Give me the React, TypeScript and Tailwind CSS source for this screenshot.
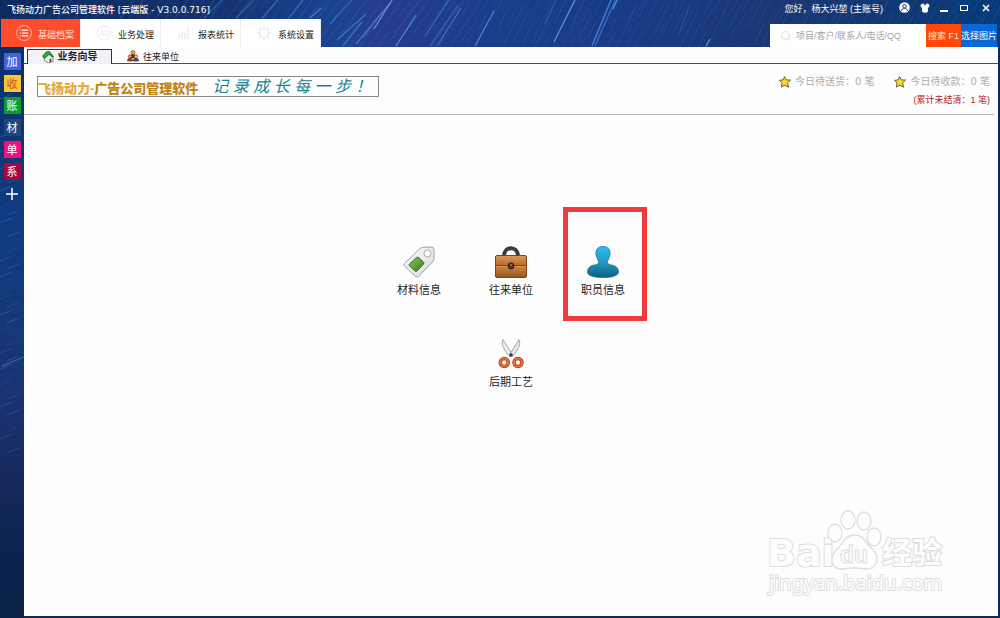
import React from 'react';
import { Search, Shirt, List } from 'lucide-react';

interface Shortcut {
  label: string;
  className: string;
}

const shortcuts: Shortcut[] = [
  { label: '加', className: 'bg-[#4462dc] text-white' },
  { label: '收', className: 'bg-[#f8c537] text-[#c8501a]' },
  { label: '账', className: 'bg-[#0a9c2c] text-white' },
  { label: '材', className: 'bg-[#1c4a76] text-white' },
  { label: '单', className: 'bg-[#f30f80] text-white' },
  { label: '系', className: 'bg-[#a8083f] text-white' },
];

// star trails: lower end x, y, upper end x, y, colour, opacity
const brightTrails: [number, number, number, number, string, number][] = [
  [203, 19, 222, 0, '#3f74c8', 0.6],
  [236, 18, 254, 0, '#3f74c8', 0.6],
  [262, 18, 278, 0, '#4a80d4', 0.6],
  [288, 19, 303, 0, '#5a80d8', 0.7],
  [310, 18, 321, 8, '#6a8ee0', 0.7],
  [330, 24, 352, 0, '#3a7ad4', 0.7],
  [337, 40, 366, 14, '#3a86dc', 0.8],
  [343, 46, 362, 22, '#4292e4', 0.8],
  [356, 44, 390, 3, '#5a7cda', 0.8],
  [363, 38, 382, 12, '#4a74d4', 0.6],
  [374, 29, 392, 0, '#8490e4', 0.9],
  [396, 46, 416, 15, '#4a92ea', 0.9],
  [425, 36, 449, 0, '#3f86dc', 0.7],
  [430, 46, 458, 5, '#3f7cd4', 0.7],
  [437, 46, 461, 8, '#3f86e0', 0.8],
  [475, 46, 494, 11, '#4a94ec', 0.9],
  [554, 42, 575, 0, '#5a9cf0', 0.95],
  [592, 46, 611, 0, '#4a90ec', 0.9],
  [595, 46, 615, 0, '#3a7cd8', 0.8],
  [613, 9, 617, 0, '#5aa0f4', 0.9],
  [545, 24, 556, 0, '#2f68c0', 0.7],
  [678, 36, 690, 5, '#2a60b0', 0.7],
  [706, 46, 710, 39, '#7aa4e0', 0.8],
];

const faintTrails = Array.from({ length: 300 }, (_, i) => ({
  x: (i * 197) % 1010,
  y: 10 + ((i * 37) % 50),
  len: 14 + ((i * 13) % 30),
  opacity: 0.08 + ((i * 7) % 5) * 0.04,
}));

function HeaderSky() {
  return (
    <svg
      className="absolute inset-0 w-full h-full"
      viewBox="0 0 1000 47"
      preserveAspectRatio="xMidYMid slice"
      aria-hidden="true"
    >
      <defs>
        <linearGradient id="sky" x1="0" x2="1" y1="0" y2="0">
          <stop offset="0" stopColor="#0c2c60" />
          <stop offset="0.2" stopColor="#14306a" />
          <stop offset="0.33" stopColor="#1a438f" />
          <stop offset="0.38" stopColor="#263c8c" />
          <stop offset="0.5" stopColor="#1a3d88" />
          <stop offset="0.68" stopColor="#193a80" />
          <stop offset="0.8" stopColor="#1a3670" />
          <stop offset="1" stopColor="#063a78" />
        </linearGradient>
      </defs>
      <rect width="1000" height="47" fill="url(#sky)" />
      {faintTrails.map((t, i) => (
        <line
          key={i}
          x1={t.x}
          y1={t.y}
          x2={t.x + t.len * (t.x > 460 ? 0.5 : 0.75)}
          y2={t.y - t.len}
          stroke="#4f86e4"
          strokeWidth="1"
          opacity={t.opacity}
        />
      ))}
      {brightTrails.map(([x1, y1, x2, y2, color, opacity], i) => (
        <line key={i} x1={x1} y1={y1} x2={x2} y2={y2} stroke={color} strokeWidth="1.200" opacity={opacity} />
      ))}
    </svg>
  );
}

function SidebarSky() {
  return (
    <svg
      className="absolute inset-0 w-full h-full"
      viewBox="0 0 24 571"
      preserveAspectRatio="none"
      aria-hidden="true"
    >
      <defs>
        <linearGradient id="side" x1="0" x2="0" y1="0" y2="1">
          <stop offset="0" stopColor="#0c2f68" />
          <stop offset="0.3" stopColor="#0e3c80" />
          <stop offset="0.6" stopColor="#1a3474" />
          <stop offset="0.78" stopColor="#15285a" />
          <stop offset="0.85" stopColor="#0d2450" />
          <stop offset="1" stopColor="#0b2248" />
        </linearGradient>
      </defs>
      <rect width="24" height="571" fill="url(#side)" />
      {Array.from({ length: 44 }, (_, i) => {
        const x = (i * 7) % 14;
        const y = 14 + i * 9 + ((i * 5) % 6);
        return (
          <line
            key={i}
            x1={x}
            y1={y}
            x2={x + 12}
            y2={y - 5}
            stroke="#6d9ae4"
            strokeWidth="1"
            opacity={0.08 + (i % 5) * 0.05}
          />
        );
      })}
      <path d="M2 319l22-9" stroke="#5f90e0" opacity=".6" />
    </svg>
  );
}

function AdIcon() {
  return (
    <svg className="w-4 h-4" viewBox="0 0 16 16" fill="none" stroke="#ececf0">
      <circle cx="8" cy="8" r="7" />
      <path d="M4 11l2-6 2 6M4.700 9h2.600M9.500 5v6h1a2.500 3 0 0 0 0-6z" />
    </svg>
  );
}

function BarsIcon() {
  return (
    <svg className="w-4 h-4" viewBox="0 0 16 16" fill="none" stroke="#e8eaee">
      <path d="M3 9v5M6 6v8M9 8v6M12 2v12" strokeWidth="1.500" />
    </svg>
  );
}

function GearIcon() {
  return (
    <svg className="w-4 h-4" viewBox="0 0 16 16" fill="none" stroke="#e4e6ea">
      <circle cx="8" cy="8" r="4.500" />
      <path
        d="M8 1.500v2M8 12.500v2M1.500 8h2M12.500 8h2M3.400 3.400l1.400 1.400M11.200 11.200l1.400 1.400M3.400 12.600l1.400-1.400M11.200 4.800l1.400-1.400"
        strokeWidth="1.500"
      />
    </svg>
  );
}

function ListIcon() {
  return (
    <span className="flex items-center justify-center w-4 h-4 rounded-full border border-[#ffb3a2] text-white">
      <List className="w-2.5 h-2.5" strokeWidth={3} />
    </span>
  );
}

const navItems = [
  { label: '基础档案', icon: <ListIcon />, active: true },
  { label: '业务处理', icon: <AdIcon /> },
  { label: '报表统计', icon: <BarsIcon /> },
  { label: '系统设置', icon: <GearIcon /> },
];

function HomeIcon() {
  return (
    <svg className="w-3 h-3" viewBox="0 0 12 12">
      <path d="M2 6l4-3.500 5 3v5L6.500 12 2.500 9.500z" fill="#f2f4f4" stroke="#555" strokeWidth=".7" />
      <path d="M.5 5L4.500.800l3-.3 4 5-1.500.5L7 3.500 2.500 7.500z" fill="#2fa536" stroke="#125c18" strokeWidth=".7" />
      <path d="M7.500 8l1.800-.6v3l-1.800.8z" fill="#444" />
    </svg>
  );
}

function PeopleIcon() {
  return (
    <svg className="w-3 h-3" viewBox="0 0 12 12" strokeWidth=".6">
      <path d="M3.500 6c0-2 5-2 5 0v2h-5z" fill="#7a2a10" stroke="#401808" />
      <circle cx="6" cy="2.500" r="2" fill="#f0b030" stroke="#5a3008" />
      <path d="M.5 11c0-4 5-4 5 0z" fill="#c83418" stroke="#501008" />
      <circle cx="3" cy="6.500" r="1.700" fill="#e8a040" stroke="#5a3008" />
      <path d="M6.300 11c0-4 5.200-4 5.200 0z" fill="#2c50b8" stroke="#101c50" />
      <circle cx="9" cy="6.500" r="1.700" fill="#f4d070" stroke="#5a3008" />
    </svg>
  );
}

function StarIcon() {
  return (
    <svg className="w-3 h-3" viewBox="0 0 12 12">
      <path
        d="M5.500.6l1.700 3.300 4.300.1-3 2.900 1.300 4.300-4-2-3.500 1.800.8-3.900L.5 4.300l3.700-.4z"
        fill="#f8dc38"
        stroke="#4c4010"
        strokeWidth=".8"
        strokeLinejoin="round"
      />
    </svg>
  );
}

function UserBadgeIcon() {
  return (
    <svg className="w-[11px] h-[11px]" viewBox="0 0 11 11">
      <circle cx="5.500" cy="5.500" r="5.300" fill="#fff" />
      <circle cx="5.500" cy="4.200" r="1.800" fill="none" stroke="#1a3a70" />
      <path d="M2.500 9c.3-3.500 5.700-3.500 6 0" fill="none" stroke="#1a3a70" />
    </svg>
  );
}

function TagIcon() {
  return (
    <svg className="w-8 h-8" viewBox="0 0 32 32">
      <defs>
        <linearGradient id="tag" x1="0" x2="1" y1="0" y2="1">
          <stop offset="0" stopColor="#fff" />
          <stop offset="1" stopColor="#d8d8da" />
        </linearGradient>
        <linearGradient id="leaf" x1="0" x2="1" y1="0" y2="1">
          <stop offset="0" stopColor="#8cc05c" />
          <stop offset="1" stopColor="#3c7d1c" />
        </linearGradient>
      </defs>
      <path
        d="M17 2.500Q18.500 1.500 20 1.300L28 1q3 0 3 3v8q0 2-1.200 3.500L15.500 30.500q-1.500 1-3 0L1.500 20q-1-1.500 0-2.500z"
        fill="url(#tag)"
        stroke="#a0a0a6"
      />
      <circle cx="24.500" cy="7.500" r="3.500" fill="#fff" stroke="#a8a8ae" />
      <path d="M13.500 11.500q1-.8 2 0l5 4.500q.8 1 0 2l-6.500 7q-1 .8-2 0l-5.500-5q-.8-1 0-2z" fill="url(#leaf)" stroke="#3a701e" />
    </svg>
  );
}

function BriefcaseIcon() {
  return (
    <svg className="w-8 h-8" viewBox="0 0 32 32">
      <defs>
        <linearGradient id="case" x1="0" x2="0" y1="0" y2="1">
          <stop offset="0" stopColor="#de9a58" />
          <stop offset="0.4" stopColor="#b87030" />
          <stop offset="0.48" stopColor="#cc8440" />
          <stop offset="1" stopColor="#985420" />
        </linearGradient>
      </defs>
      <path d="M9 10C9-.5 23-.5 23 10" fill="none" stroke="#3a3a3c" strokeWidth="4" />
      <rect x=".5" y="9.500" width="31" height="22" rx="1.500" fill="url(#case)" stroke="#7a4218" />
      <path d="M1 19.500h30" stroke="#7a4418" />
      <path d="M1 20.500h30" stroke="#dea468" opacity=".6" />
      <circle cx="16" cy="20" r="3" fill="#4a3a34" stroke="#2a1c16" />
      <circle cx="16" cy="19" r="1" fill="#8c7c74" />
    </svg>
  );
}

function PersonIcon() {
  return (
    <svg className="w-8 h-8" viewBox="0 0 32 32">
      <defs>
        <linearGradient id="person" x1="0" x2="0" y1="0" y2="1">
          <stop offset="0" stopColor="#2cc0f0" />
          <stop offset="0.55" stopColor="#1f94bc" />
          <stop offset="1" stopColor="#0c5f80" />
        </linearGradient>
      </defs>
      <path
        d="M16 .5c5 0 7.500 3 7 7.500-.3 3.500-1.800 5.500-2.500 7.500-.4 2 .8 3 4 3.500 4.500.6 7 3 7 7 0 3.500-5.500 5.500-15.500 5.500S.5 29.500.5 26c0-4 2.500-6.400 7-7 3.200-.5 4.400-1.500 4-3.500C10.800 13.500 9.300 11.500 9 8c-.5-4.500 2-7.500 7-7.500z"
        fill="url(#person)"
        stroke="#1579a0"
        strokeWidth=".8"
      />
    </svg>
  );
}

function ScissorsIcon() {
  return (
    <svg className="w-8 h-8" viewBox="0 0 32 32">
      <path d="M8 1.500c-1.500 3-.5 7 2 11l5 6.500 2-3z" fill="#ececf0" stroke="#a4a4aa" />
      <path d="M24 1.500c1.500 3 .5 7-2 11L17 19l-2-3z" fill="#e4e4ea" stroke="#a4a4aa" />
      <circle cx="16" cy="17" r="1.800" fill="#3c3c44" />
      <circle cx="9.300" cy="24.500" r="4" fill="#fff" stroke="#a83c14" strokeWidth="3.500" />
      <circle cx="23" cy="24.500" r="4" fill="#fff" stroke="#a83c14" strokeWidth="3.500" />
      <circle cx="9.300" cy="24.500" r="4" fill="none" stroke="#e0703c" strokeWidth="2.200" />
      <circle cx="23" cy="24.500" r="4" fill="none" stroke="#e0703c" strokeWidth="2.200" />
    </svg>
  );
}

interface LauncherProps {
  label: string;
  icon: React.ReactNode;
  highlighted?: boolean;
  className?: string;
}

function Launcher({ label, icon, highlighted, className = '' }: LauncherProps) {
  return (
    <div className={`relative flex justify-center h-[92px] ${className}`}>
      <button className="flex flex-col items-center self-start gap-1 pt-0.5 text-[11px] leading-4 text-[#222]">
        {icon}
        {label}
      </button>
      {highlighted && (
        <div className="absolute -top-[37px] left-1.5 right-0.5 h-[114px] border-[5px] border-[#f03a3c] pointer-events-none" />
      )}
    </div>
  );
}

function Watermark() {
  return (
    <svg
      className="absolute right-[48px] bottom-[16px] w-[186px] h-[92px] pointer-events-none"
      viewBox="0 0 186 92"
      fill="#fdfdfd"
      stroke="#dedede"
      strokeWidth="1.300"
    >
      <g paintOrder="stroke" strokeWidth="2">
        <text x="3" y="58" fontSize="38" fontWeight="700" fontFamily="DejaVu Sans, sans-serif">Bai</text>
        <text x="118" y="55" fontSize="30" fontWeight="700" fontFamily="Noto Sans CJK SC, sans-serif">经验</text>
        <text x="5" y="82" fontSize="20" fontFamily="Noto Sans, sans-serif">jingyan.baidu.com</text>
      </g>
      <ellipse cx="71" cy="25" rx="7" ry="9" />
      <ellipse cx="84" cy="12" rx="7" ry="9" />
      <ellipse cx="100" cy="13" rx="7" ry="9" />
      <ellipse cx="110" cy="29" rx="7" ry="9" />
      <path d="M91 27c6 0 9 4 12 8s9 8 10 14c1 7-4 12-10 12-5 0-8-1-13-1s-8 1-13 1c-6 0-10-5-9-11s7-10 10-15 7-8 13-8z" />
      <text x="76" y="55" fontSize="23" fontWeight="700" fontFamily="Liberation Sans, sans-serif" strokeWidth="1">du</text>
    </svg>
  );
}

function TitleBar() {
  return (
    <div className="flex items-center justify-between h-[19px] pl-[7px] pr-2 text-[9px] text-white">
      <h1 className="pt-0.5 font-['DejaVu_Sans','Noto_Sans_CJK_SC',sans-serif] font-medium">
        飞扬动力广告公司管理软件 [云端版 - V3.0.0.716]
      </h1>
      <div className="flex items-center">
        <span className="mr-4">您好，杨大兴堃 (主账号)</span>
        <div className="flex items-center gap-2.5 pr-0.5 pb-1">
          <button aria-label="账号">
            <UserBadgeIcon />
          </button>
          <button aria-label="皮肤">
            <Shirt className="w-2.5 h-2.5 fill-white" />
          </button>
          <button aria-label="最小化" className="flex items-end w-2.5 h-2">
            <span className="w-2 h-0.5 bg-white" />
          </button>
          <button aria-label="最大化" className="w-2 h-1.5 border border-white" />
          <button aria-label="关闭" className="pl-1">
            <svg className="w-2 h-2" viewBox="0 0 8 8" stroke="#fff" strokeWidth="1.500">
              <path d="M1 1l6 6M7 1L1 7" />
            </svg>
          </button>
        </div>
      </div>
    </div>
  );
}

function MainNav() {
  return (
    <div className="flex items-end justify-between pl-px pr-[3px]">
      <nav className="flex h-7">
        {navItems.map((item) => (
          <button
            key={item.label}
            className={`flex items-center justify-between w-20 pl-[15px] pr-1.5 border-r border-[#ececf0] text-[9px] leading-4 ${
              item.active ? 'bg-[#ff4c2c] text-[#ffe4dc]' : 'bg-white text-[#222]'
            }`}
          >
            {item.icon}
            <span className="pt-1">{item.label}</span>
          </button>
        ))}
      </nav>
      <form className="flex h-[23px] text-[9px]" onSubmit={(e) => e.preventDefault()}>
        <label className="flex items-center gap-1 w-[156px] pl-2.5 bg-white">
          <Search className="w-3 h-3 text-[#d0d0d0] shrink-0" strokeWidth={1.5} />
          <input
            aria-label="搜索"
            className="w-full min-w-0 pt-0.5 outline-none text-[#333] placeholder:text-[#a4a4a4]"
            placeholder="项目/客户/联系人/电话/QQ"
          />
        </label>
        <button className="w-[35px] pt-0.5 bg-[#ff4808] text-[#ffeadc] whitespace-nowrap">搜索 F1</button>
        <button type="button" className="w-9 pt-0.5 bg-[#0a68d6] text-white whitespace-nowrap">选择图片</button>
      </form>
    </div>
  );
}

function Tabs() {
  return (
    <div role="tablist" className="flex items-end h-[17px] pl-[3px] border-b border-[#4c4c50] text-[9px] leading-3 text-[#222]">
      <button
        role="tab"
        aria-selected="true"
        className="flex items-center justify-center gap-1 w-[85px] h-[15px] -mb-px border border-b-0 border-[#333] bg-[#f2f2f6] text-[10px] font-bold"
      >
        <HomeIcon />
        业务向导
      </button>
      <button role="tab" aria-selected="false" className="flex items-center gap-1 pl-[15px] pt-0.5">
        <PeopleIcon />
        <span className="pt-0.5">往来单位</span>
      </button>
    </div>
  );
}

function Banner() {
  return (
    <div className="flex items-start justify-between h-[51px] pt-3 pl-[13px] pr-1 mr-1 border-b border-[#b8b8b8]">
      <div className="flex items-center w-[342px] h-[21px] border border-[#888] whitespace-nowrap">
        <p className="text-[13px] leading-4 font-black pt-1">
          <span className="text-[#e6a837]">飞扬动力-</span>
          <span className="text-[#bf8510]">广告公司管理软件</span>
        </p>
        <p className="pl-3.5 text-[16px] leading-4 italic text-[#158494]">
          记 录 成 长 每 一 步 ！
        </p>
      </div>
      <div className="flex flex-col items-end text-[10px] leading-3 text-[#adadad]">
        <div className="flex gap-5 font-['DejaVu_Sans','Noto_Sans_CJK_SC',sans-serif]">
          <p className="flex items-center gap-1"><StarIcon />今日待送货：0 笔</p>
          <p className="flex items-center gap-1"><StarIcon />今日待收款：0 笔</p>
        </div>
        <p className="pt-1.5 text-[9px] text-[#b81c1c]">(累计未结清：1 笔)</p>
      </div>
    </div>
  );
}

export default function App() {
  return (
    <div className="flex flex-col min-h-screen bg-[#0c2a58] font-['Liberation_Sans','Noto_Sans_CJK_SC',sans-serif]">
      <header className="relative">
        <HeaderSky />
        <div className="relative">
          <TitleBar />
          <MainNav />
        </div>
      </header>

      <div className="flex flex-1">
        <aside className="relative w-6 shrink-0">
          <SidebarSky />
          <div className="relative flex flex-col items-center gap-[5px] pt-1.5">
            {shortcuts.map((s) => (
              <button key={s.label} className={`w-[17px] h-[17px] text-[11px] leading-4 ${s.className}`}>
                {s.label}
              </button>
            ))}
            <button aria-label="添加" className="flex items-center justify-center w-[17px] h-[17px]">
              <svg className="w-3 h-3" viewBox="0 0 12 12" stroke="#fff" strokeWidth="1.500">
                <path d="M6 0v12M0 6h12" />
              </svg>
            </button>
          </div>
        </aside>

        <main className="relative flex-1 flex flex-col mr-0.5 mb-0.5 bg-[#fdfdfd]">
          <Tabs />
          <Banner />
          <div className="grid grid-cols-[92px_92px_92px] justify-center pt-[129px]">
            <Launcher label="材料信息" icon={<TagIcon />} />
            <Launcher label="往来单位" icon={<BriefcaseIcon />} />
            <Launcher label="职员信息" icon={<PersonIcon />} highlighted />
            <Launcher label="后期工艺" icon={<ScissorsIcon />} className="col-start-2" />
          </div>
          <Watermark />
        </main>
      </div>
    </div>
  );
}
